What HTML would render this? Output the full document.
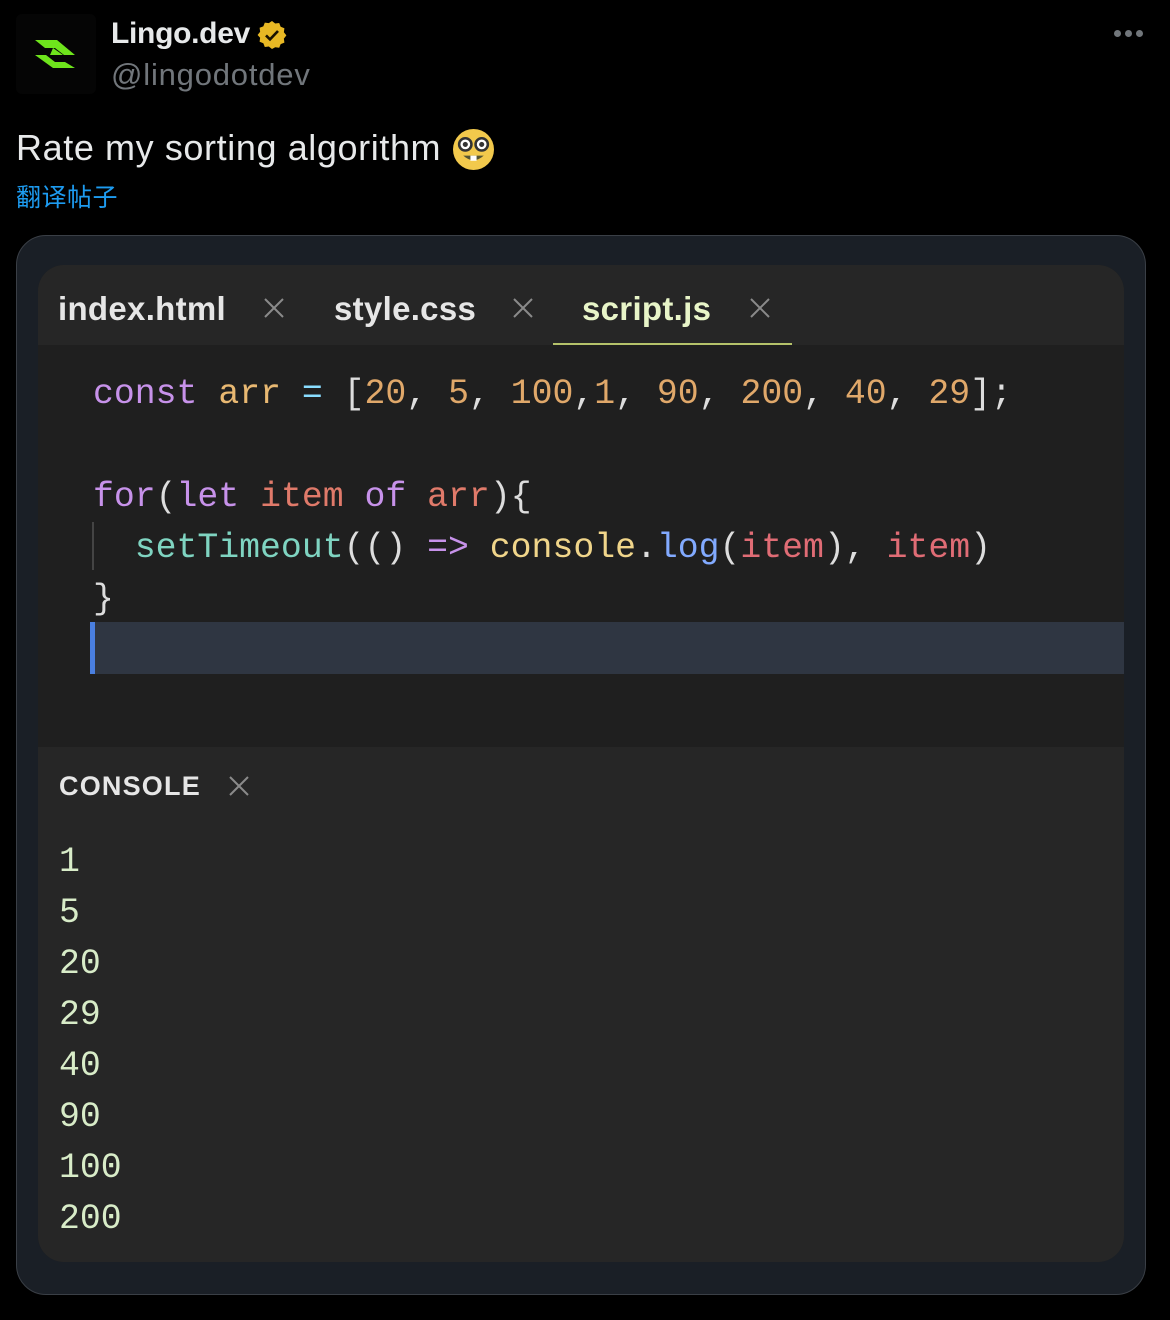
<!DOCTYPE html>
<html><head><meta charset="utf-8"><style>
*{margin:0;padding:0;box-sizing:border-box}
body{width:1170px;height:1320px;background:#000;position:relative;overflow:hidden;font-family:"Liberation Sans","Noto Sans CJK SC",sans-serif}
.abs{position:absolute}
.mono{font-family:"Liberation Mono","DejaVu Sans Mono",monospace;font-size:34.8px;white-space:pre;line-height:51px}
.tab{position:absolute;top:290px;font-size:33px;color:#e6e6e6;font-weight:bold;letter-spacing:0.3px}
.x{position:absolute;top:297px;width:22px;height:22px}
</style></head><body>
<div class="abs" style="left:16px;top:14px;width:80px;height:80px;border-radius:6px;background:#050505"></div>
<svg class="abs" style="left:30px;top:36px" width="50" height="36" viewBox="0 0 50 36">
<polygon points="5,4 27,4 45,19 34,19 25,12 15,12" fill="#6ee41c"/>
<polygon points="5,19 16,19 25,26 35,26 45,32 23,32" fill="#6ee41c"/>
<polygon points="23,12 33,19 20,19" fill="#6ee41c"/>
</svg>
<div class="abs" style="left:111px;top:17px;font-size:30px;color:#e7e9ea;font-weight:bold;letter-spacing:-0.3px">Lingo.dev</div>
<svg class="abs" style="left:256px;top:19px" width="32" height="32" viewBox="0 0 24 24"><path d="M12 1.5l2.4 1.9 3-.4 1.1 2.8 2.8 1.1-.4 3 1.9 2.4-1.9 2.4.4 3-2.8 1.1-1.1 2.8-3-.4L12 22.5l-2.4-1.9-3 .4-1.1-2.8-2.8-1.1.4-3L1.2 12l1.9-2.4-.4-3 2.8-1.1 1.1-2.8 3 .4z" fill="#e8b824"/><path d="M7.5 12.3l3 3 6-6.3" stroke="#1a1200" stroke-width="2" fill="none"/></svg>
<div class="abs" style="left:111px;top:57px;font-size:31px;color:#71767b;letter-spacing:0.8px">@lingodotdev</div>
<div class="abs" style="left:1114px;top:30px;width:40px;height:8px">
<span class="abs" style="left:0;top:0;width:7px;height:7px;border-radius:50%;background:#71767b"></span>
<span class="abs" style="left:11px;top:0;width:7px;height:7px;border-radius:50%;background:#71767b"></span>
<span class="abs" style="left:22px;top:0;width:7px;height:7px;border-radius:50%;background:#71767b"></span></div>
<div class="abs" style="left:16px;top:127px;font-size:36px;color:#e7e9ea;letter-spacing:0.6px">Rate my sorting algorithm</div>
<svg class="abs" style="left:453px;top:129px" width="41" height="41" viewBox="0 0 40 40"><circle cx="20" cy="20" r="20" fill="#f2c94c"/><circle cx="12" cy="15" r="6" fill="#fff" stroke="#333" stroke-width="2.5"/><circle cx="28" cy="15" r="6" fill="#fff" stroke="#333" stroke-width="2.5"/><circle cx="12" cy="15" r="2.5" fill="#333"/><circle cx="28" cy="15" r="2.5" fill="#333"/><path d="M10 26q10 9 20 0z" fill="#553"/><rect x="17" y="26" width="6" height="5" fill="#fff"/></svg>
<div class="abs" style="left:16px;top:178px;font-size:25px;color:#1d9bf0;letter-spacing:0.5px">翻译帖子</div>

<div class="abs" style="left:16px;top:235px;width:1130px;height:1060px;border-radius:30px;background:#1a1f26;border:1.5px solid #3a3f46"></div>
<div class="abs" style="left:38px;top:265px;width:1086px;height:997px;border-radius:26px;background:#1f1f1f;overflow:hidden">
  <div class="abs" style="left:0;top:0;width:1086px;height:80px;background:#262626"></div>
  <div class="abs" style="left:0;top:482px;width:1086px;height:520px;background:#262626"></div>
</div>
<div class="tab" style="left:58px">index.html</div>
<svg class="x" style="left:263px"><path d="M2 2L20 20M20 2L2 20" stroke="#8a8a8a" stroke-width="2"/></svg>
<div class="tab" style="left:334px">style.css</div>
<svg class="x" style="left:512px"><path d="M2 2L20 20M20 2L2 20" stroke="#8a8a8a" stroke-width="2"/></svg>
<div class="tab" style="left:582px;color:#e8f5c8">script.js</div>
<svg class="x" style="left:749px"><path d="M2 2L20 20M20 2L2 20" stroke="#8a8a8a" stroke-width="2"/></svg>
<div class="abs" style="left:553px;top:343px;width:239px;height:2px;background:#b5c26a"></div>

<div class="abs mono" style="left:93px;top:369px"><span style="color:#c792ea">const</span> <span style="color:#e8b872">arr</span> <span style="color:#89ddff">=</span> <span style="color:#ddd">[</span><span style="color:#e0a86a">20</span><span style="color:#ddd">, </span><span style="color:#e0a86a">5</span><span style="color:#ddd">, </span><span style="color:#e0a86a">100</span><span style="color:#ddd">,</span><span style="color:#e0a86a">1</span><span style="color:#ddd">, </span><span style="color:#e0a86a">90</span><span style="color:#ddd">, </span><span style="color:#e0a86a">200</span><span style="color:#ddd">, </span><span style="color:#e0a86a">40</span><span style="color:#ddd">, </span><span style="color:#e0a86a">29</span><span style="color:#ddd">];</span></div>
<div class="abs mono" style="left:93px;top:472px"><span style="color:#c792ea">for</span><span style="color:#ddd">(</span><span style="color:#c792ea">let</span> <span style="color:#e07a6a">item</span> <span style="color:#c792ea">of</span> <span style="color:#e07a6a">arr</span><span style="color:#ddd">){</span></div>
<div class="abs" style="left:92px;top:522px;width:2px;height:48px;background:#444"></div>
<div class="abs mono" style="left:93px;top:523px">  <span style="color:#7fd4c1">setTimeout</span><span style="color:#ddd">(()</span> <span style="color:#c792ea">=&gt;</span> <span style="color:#f0d58a">console</span><span style="color:#ddd">.</span><span style="color:#82aaff">log</span><span style="color:#ddd">(</span><span style="color:#e06c75">item</span><span style="color:#ddd">), </span><span style="color:#e06c75">item</span><span style="color:#ddd">)</span></div>
<div class="abs mono" style="left:93px;top:574px;color:#ddd">}</div>
<div class="abs" style="left:90px;top:622px;width:1034px;height:52px;background:#2f3642"></div>
<div class="abs" style="left:90px;top:622px;width:5px;height:52px;background:#4a7fe0"></div>

<div class="abs" style="left:59px;top:771px;font-size:27px;font-weight:bold;color:#e6e6e6;letter-spacing:1.2px">CONSOLE</div>
<svg class="abs" style="left:228px;top:775px" width="22" height="22"><path d="M2 2L20 20M20 2L2 20" stroke="#8a8a8a" stroke-width="2"/></svg>
<div class="abs mono" style="left:59px;top:837px;color:#d8ecc8">1
5
20
29
40
90
100
200</div>
</body></html>
